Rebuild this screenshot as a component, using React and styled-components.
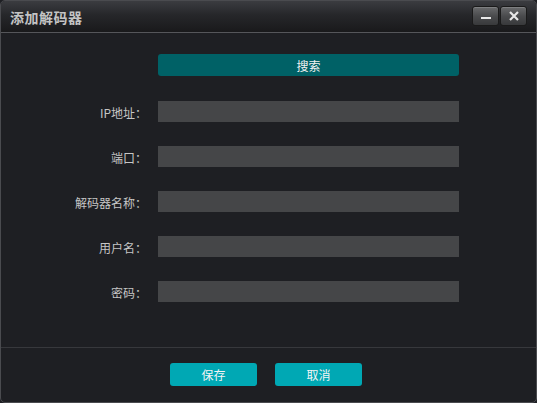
import React from "react";
import styled, { createGlobalStyle } from "styled-components";

const GlobalStyle = createGlobalStyle`
  html, body {
    margin: 0;
    padding: 0;
    background: #1e1f23;
  }
  * {
    box-sizing: border-box;
  }
`;

const cjk = `"Noto Sans CJK SC", "Noto Sans", sans-serif`;

const StyledWindow = styled.div`
  width: 537px;
  height: 403px;
  display: flex;
  flex-direction: column;
  background: #1e1f23;
  border: 1px solid #4a4b4f;
  border-radius: 5px;
  overflow: hidden;
  font-family: ${cjk};
`;

const StyledTitleBar = styled.div`
  height: 32px;
  flex-shrink: 0;
  display: flex;
  align-items: center;
  justify-content: space-between;
  padding: 0 9px 0 9px;
  background: linear-gradient(#3b3c40, #26272a 45%, #19191b);
  border-bottom: 1px solid #55565a;
`;

const StyledTitle = styled.div`
  color: #c4c4c4;
  font-size: 14px;
  font-weight: bold;
  letter-spacing: 0.5px;
`;

const StyledTitleButtons = styled.div`
  display: flex;
  gap: 1px;
  margin-top: -2px;
`;

const StyledTitleButton = styled.div`
  width: 27px;
  height: 20px;
  display: flex;
  align-items: center;
  justify-content: center;
  border: 1px solid #1a1a1a;
  border-radius: 3px;
  background: linear-gradient(#6a6b6d, #4a4b4d 50%, #38393b);
  box-shadow: inset 0 1px 0 rgba(255, 255, 255, 0.15);
`;

const StyledBody = styled.div`
  flex: 1;
  display: grid;
  grid-template-columns: 148px 301px;
  column-gap: 9px;
  row-gap: 24px;
  align-content: start;
  padding-top: 21px;
  border-bottom: 1px solid #37383c;
`;

const StyledSearch = styled.div`
  grid-column: 2;
  height: 22px;
  margin-bottom: 1px;
  display: flex;
  align-items: center;
  justify-content: center;
  background: #006166;
  border-radius: 3px;
  color: #f2f2f2;
  font-size: 12px;
`;

const StyledLabel = styled.div`
  height: 21px;
  text-align: right;
  color: #c6c6c6;
  font-size: 12px;
  line-height: 23px;
  padding-right: 2px;
  white-space: nowrap;
`;

const StyledInput = styled.div`
  height: 21px;
  background: #454648;
`;

const StyledFooter = styled.div`
  height: 54px;
  flex-shrink: 0;
  display: flex;
  justify-content: center;
  gap: 18px;
  padding: 15px 5px 0 0;
`;

const StyledButton = styled.div`
  width: 87px;
  height: 23px;
  display: flex;
  align-items: center;
  justify-content: center;
  background: #00a8b4;
  border-radius: 3px;
  color: #f4f4f4;
  font-size: 12px;
`;

const fields = ["IP地址：", "端口：", "解码器名称：", "用户名：", "密码："];

export default function App() {
  return (
    <>
      <GlobalStyle />
      <StyledWindow>
        <StyledTitleBar>
          <StyledTitle>添加解码器</StyledTitle>
          <StyledTitleButtons>
            <StyledTitleButton>
              <svg width="12" height="10" viewBox="0 0 12 10">
                <rect x="1" y="6" width="10" height="2" fill="#e8e8e8" />
              </svg>
            </StyledTitleButton>
            <StyledTitleButton>
              <svg width="12" height="12" viewBox="0 0 12 12">
                <path d="M2 2 L10 10 M10 2 L2 10" stroke="#e8e8e8" strokeWidth="2.2" />
              </svg>
            </StyledTitleButton>
          </StyledTitleButtons>
        </StyledTitleBar>
        <StyledBody>
          <StyledSearch>搜索</StyledSearch>
          {fields.map((f) => (
            <React.Fragment key={f}>
              <StyledLabel>{f}</StyledLabel>
              <StyledInput />
            </React.Fragment>
          ))}
        </StyledBody>
        <StyledFooter>
          <StyledButton>保存</StyledButton>
          <StyledButton>取消</StyledButton>
        </StyledFooter>
      </StyledWindow>
    </>
  );
}
